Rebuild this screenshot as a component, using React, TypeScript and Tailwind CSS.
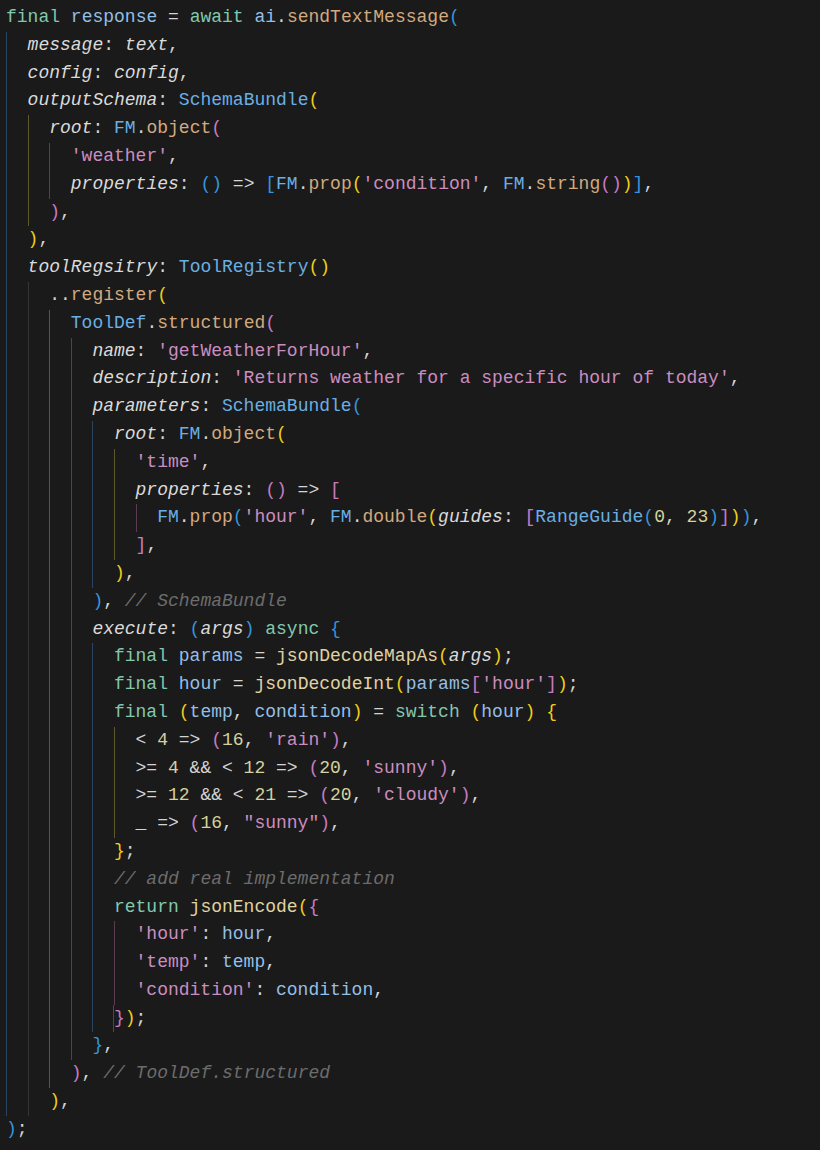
import React from 'react';

type Tok = [string, string];
type Line = { i: number; t: Tok[] };

// token colours
const C: Record<string, string> = {
  k: 'text-[#82c8ae]',
  v: 'text-[#94bfe6]',
  f: 'text-[#d3a97f]',
  g: 'text-[#e0d2a2]',
  c: 'text-[#6aafe4]',
  p: 'text-[#dadada] italic',
  s: 'text-[#cb8dc0]',
  n: 'text-[#d4d29e]',
  o: 'text-[#d4d4d4]',
  m: 'text-[#6c6c6c] italic',
  B: 'text-[#3595dc]',
  Y: 'text-[#f0cd1c]',
  P: 'text-[#c87ac4]',
};

// indent / bracket pair guide colours
const G: Record<string, string> = {
  B: 'border-l border-[#2a4560]',
  Y: 'border-l border-[#5e592c]',
  P: 'border-l border-[#5c3b53]',
  G: 'border-l border-[#353535]',
};

const lines: Line[] = [
  { i: 0, t: [['k', 'final'], ['o', ' '], ['v', 'response'], ['o', ' = '], ['k', 'await'], ['o', ' '], ['v', 'ai'], ['o', '.'], ['f', 'sendTextMessage'], ['B', '(']] },
  { i: 2, t: [['p', 'message'], ['o', ': '], ['p', 'text'], ['o', ',']] },
  { i: 2, t: [['p', 'config'], ['o', ': '], ['p', 'config'], ['o', ',']] },
  { i: 2, t: [['p', 'outputSchema'], ['o', ': '], ['c', 'SchemaBundle'], ['Y', '(']] },
  { i: 4, t: [['p', 'root'], ['o', ': '], ['c', 'FM'], ['o', '.'], ['f', 'object'], ['P', '(']] },
  { i: 6, t: [['s', "'weather'"], ['o', ',']] },
  { i: 6, t: [['p', 'properties'], ['o', ': '], ['B', '()'], ['o', ' => '], ['B', '['], ['c', 'FM'], ['o', '.'], ['f', 'prop'], ['Y', '('], ['s', "'condition'"], ['o', ', '], ['c', 'FM'], ['o', '.'], ['f', 'string'], ['P', '()'], ['Y', ')'], ['B', ']'], ['o', ',']] },
  { i: 4, t: [['P', ')'], ['o', ',']] },
  { i: 2, t: [['Y', ')'], ['o', ',']] },
  { i: 2, t: [['p', 'toolRegsitry'], ['o', ': '], ['c', 'ToolRegistry'], ['Y', '()']] },
  { i: 4, t: [['o', '..'], ['f', 'register'], ['Y', '(']] },
  { i: 6, t: [['c', 'ToolDef'], ['o', '.'], ['f', 'structured'], ['P', '(']] },
  { i: 8, t: [['p', 'name'], ['o', ': '], ['s', "'getWeatherForHour'"], ['o', ',']] },
  { i: 8, t: [['p', 'description'], ['o', ': '], ['s', "'Returns weather for a specific hour of today'"], ['o', ',']] },
  { i: 8, t: [['p', 'parameters'], ['o', ': '], ['c', 'SchemaBundle'], ['B', '(']] },
  { i: 10, t: [['p', 'root'], ['o', ': '], ['c', 'FM'], ['o', '.'], ['f', 'object'], ['Y', '(']] },
  { i: 12, t: [['s', "'time'"], ['o', ',']] },
  { i: 12, t: [['p', 'properties'], ['o', ': '], ['P', '()'], ['o', ' => '], ['P', '[']] },
  { i: 14, t: [['c', 'FM'], ['o', '.'], ['f', 'prop'], ['B', '('], ['s', "'hour'"], ['o', ', '], ['c', 'FM'], ['o', '.'], ['f', 'double'], ['Y', '('], ['p', 'guides'], ['o', ': '], ['P', '['], ['c', 'RangeGuide'], ['B', '('], ['n', '0'], ['o', ', '], ['n', '23'], ['B', ')'], ['P', ']'], ['Y', ')'], ['B', ')'], ['o', ',']] },
  { i: 12, t: [['P', ']'], ['o', ',']] },
  { i: 10, t: [['Y', ')'], ['o', ',']] },
  { i: 8, t: [['B', ')'], ['o', ', '], ['m', '// SchemaBundle']] },
  { i: 8, t: [['p', 'execute'], ['o', ': '], ['B', '('], ['p', 'args'], ['B', ')'], ['o', ' '], ['k', 'async'], ['o', ' '], ['B', '{']] },
  { i: 10, t: [['k', 'final'], ['o', ' '], ['v', 'params'], ['o', ' = '], ['g', 'jsonDecodeMapAs'], ['Y', '('], ['p', 'args'], ['Y', ')'], ['o', ';']] },
  { i: 10, t: [['k', 'final'], ['o', ' '], ['v', 'hour'], ['o', ' = '], ['g', 'jsonDecodeInt'], ['Y', '('], ['v', 'params'], ['P', '['], ['s', "'hour'"], ['P', ']'], ['Y', ')'], ['o', ';']] },
  { i: 10, t: [['k', 'final'], ['o', ' '], ['Y', '('], ['v', 'temp'], ['o', ', '], ['v', 'condition'], ['Y', ')'], ['o', ' = '], ['k', 'switch'], ['o', ' '], ['Y', '('], ['v', 'hour'], ['Y', ')'], ['o', ' '], ['Y', '{']] },
  { i: 12, t: [['o', '< '], ['n', '4'], ['o', ' => '], ['P', '('], ['n', '16'], ['o', ', '], ['s', "'rain'"], ['P', ')'], ['o', ',']] },
  { i: 12, t: [['o', '>= '], ['n', '4'], ['o', ' && < '], ['n', '12'], ['o', ' => '], ['P', '('], ['n', '20'], ['o', ', '], ['s', "'sunny'"], ['P', ')'], ['o', ',']] },
  { i: 12, t: [['o', '>= '], ['n', '12'], ['o', ' && < '], ['n', '21'], ['o', ' => '], ['P', '('], ['n', '20'], ['o', ', '], ['s', "'cloudy'"], ['P', ')'], ['o', ',']] },
  { i: 12, t: [['o', '_ => '], ['P', '('], ['n', '16'], ['o', ', '], ['s', '"sunny"'], ['P', ')'], ['o', ',']] },
  { i: 10, t: [['Y', '}'], ['o', ';']] },
  { i: 10, t: [['m', '// add real implementation']] },
  { i: 10, t: [['k', 'return'], ['o', ' '], ['g', 'jsonEncode'], ['Y', '('], ['P', '{']] },
  { i: 12, t: [['s', "'hour'"], ['o', ': '], ['v', 'hour'], ['o', ',']] },
  { i: 12, t: [['s', "'temp'"], ['o', ': '], ['v', 'temp'], ['o', ',']] },
  { i: 12, t: [['s', "'condition'"], ['o', ': '], ['v', 'condition'], ['o', ',']] },
  { i: 10, t: [['P', '}'], ['Y', ')'], ['o', ';']] },
  { i: 8, t: [['B', '}'], ['o', ',']] },
  { i: 6, t: [['P', ')'], ['o', ', '], ['m', '// ToolDef.structured']] },
  { i: 4, t: [['Y', ')'], ['o', ',']] },
  { i: 0, t: [['B', ')'], ['o', ';']] },
];

// level = indent / 2, from/to are 1-based line numbers
const guides = [
  { lv: 0, from: 2, to: 40, c: 'B' },
  { lv: 1, from: 5, to: 8, c: 'Y' },
  { lv: 2, from: 6, to: 7, c: 'P' },
  { lv: 1, from: 11, to: 40, c: 'G' },
  { lv: 2, from: 12, to: 39, c: 'Y' },
  { lv: 3, from: 13, to: 38, c: 'P' },
  { lv: 4, from: 16, to: 21, c: 'B' },
  { lv: 5, from: 17, to: 20, c: 'Y' },
  { lv: 6, from: 19, to: 19, c: 'P' },
  { lv: 4, from: 24, to: 37, c: 'B' },
  { lv: 5, from: 27, to: 30, c: 'Y' },
  { lv: 5, from: 34, to: 37, c: 'P' },
];

const guideAt = (n: number, lv: number) => {
  const g = guides.find(g => g.lv === lv && n >= g.from && n <= g.to);
  return g ? G[g.c] : '';
};

export default function App() {
  return (
    <div className="min-h-[1150px] bg-[#1a1a1a] pt-[4px] pl-[6px] font-['Liberation_Mono',monospace] text-[18px]">
      {lines.map((ln, idx) => {
        const n = idx + 1;
        const levels = ln.i / 2;
        const own = guideAt(n, levels);
        return (
          <div key={n} className="flex h-[27.8px] leading-[27.8px] whitespace-pre">
            {Array.from({ length: levels }).map((_, lv) => (
              <span key={lv} className={`w-[21.6px] shrink-0 ${guideAt(n, lv)}`} />
            ))}
            <span className={own ? `-ml-px ${own}` : ''}>
              {ln.t.map(([k, text], j) => (
                <span key={j} className={C[k]}>
                  {text}
                </span>
              ))}
            </span>
          </div>
        );
      })}
    </div>
  );
}
